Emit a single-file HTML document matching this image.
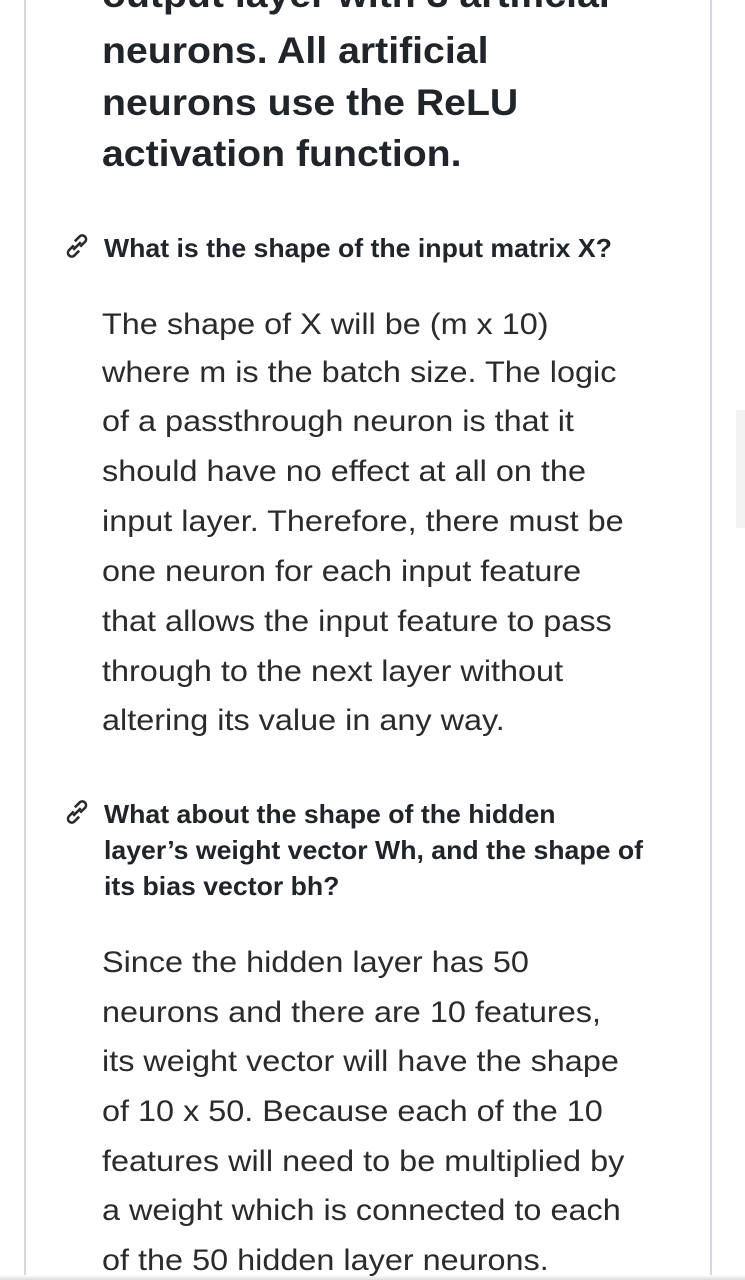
<!DOCTYPE html>
<html><head><style>
html,body{margin:0;padding:0;width:745px;height:1280px;overflow:hidden;background:#fff;}
body{position:relative;font-family:"Liberation Sans",Arial,sans-serif;color:#212529;}
.vl{position:absolute;top:0;width:2px;height:1280px;background:#d5d8dc;}
.l{position:absolute;left:102px;white-space:nowrap;transform-origin:0 50%;}
.b{font-weight:bold;font-size:37px;height:50px;line-height:50px;transform:scaleX(1.06);}
.t{font-size:30px;height:50px;line-height:50px;color:#2b2b2b;transform:scaleX(1.08);}
.h{font-weight:bold;font-size:26px;height:36px;line-height:36px;left:104px;transform:scaleX(1.025);}
.ic{position:absolute;left:62px;}
</style></head><body>
<div class="vl" style="left:24px"></div>
<div class="vl" style="left:710px"></div>
<div style="position:absolute;left:736px;top:410px;width:9px;height:118px;background:#f3f3f3"></div>
<div style="position:absolute;left:0;top:1275px;width:745px;height:5px;background:linear-gradient(#fff,#ddd)"></div>

<div class="l b" style="top:-30px">output layer with 3 artificial</div>
<div class="l b" style="top:26px">neurons. All artificial</div>
<div class="l b" style="top:78px">neurons use the ReLU</div>
<div class="l b" style="top:129px">activation function.</div>

<svg class="ic" style="top:232px" width="30" height="28" viewBox="0 0 22 22" fill="none" stroke="#2a2a2a" stroke-width="2"><path d="M8 14l6-6M8.5 10.5l-4 4a3 3 0 004.2 4.2l4-4M13.5 11.5l4-4a3 3 0 00-4.2-4.2l-4 4"/></svg>
<div class="l h" style="top:230px">What is the shape of the input matrix X?</div>

<div class="l t" style="top:300px">The shape of X will be (m x 10)</div>
<div class="l t" style="top:348px">where m is the batch size. The logic</div>
<div class="l t" style="top:397px">of a passthrough neuron is that it</div>
<div class="l t" style="top:447px">should have no effect at all on the</div>
<div class="l t" style="top:497px">input layer. Therefore, there must be</div>
<div class="l t" style="top:547px">one neuron for each input feature</div>
<div class="l t" style="top:597px">that allows the input feature to pass</div>
<div class="l t" style="top:647px">through to the next layer without</div>
<div class="l t" style="top:696px">altering its value in any way.</div>

<svg class="ic" style="top:798px" width="30" height="28" viewBox="0 0 22 22" fill="none" stroke="#2a2a2a" stroke-width="2"><path d="M8 14l6-6M8.5 10.5l-4 4a3 3 0 004.2 4.2l4-4M13.5 11.5l4-4a3 3 0 00-4.2-4.2l-4 4"/></svg>
<div class="l h" style="top:796px">What about the shape of the hidden</div>
<div class="l h" style="top:832px">layer’s weight vector Wh, and the shape of</div>
<div class="l h" style="top:868px">its bias vector bh?</div>

<div class="l t" style="top:938px">Since the hidden layer has 50</div>
<div class="l t" style="top:988px">neurons and there are 10 features,</div>
<div class="l t" style="top:1037px">its weight vector will have the shape</div>
<div class="l t" style="top:1087px">of 10 x 50. Because each of the 10</div>
<div class="l t" style="top:1137px">features will need to be multiplied by</div>
<div class="l t" style="top:1186px">a weight which is connected to each</div>
<div class="l t" style="top:1236px">of the 50 hidden layer neurons.</div>
</body></html>
